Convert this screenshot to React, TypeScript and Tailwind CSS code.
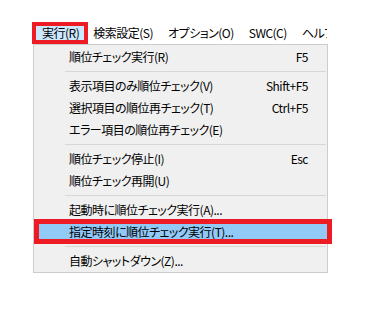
import React from "react";

const font = "font-['Yu_Gothic_UI','Noto_Sans_CJK_JP',sans-serif] [font-feature-settings:'palt'] tracking-[-0.5px]";

type Item = { label: string; shortcut?: string; active?: boolean } | "sep";

const items: Item[] = [
  { label: "順位チェック実行(R)", shortcut: "F5" },
  "sep",
  { label: "表示項目のみ順位チェック(V)", shortcut: "Shift+F5" },
  { label: "選択項目の順位再チェック(T)", shortcut: "Ctrl+F5" },
  { label: "エラー項目の順位再チェック(E)" },
  "sep",
  { label: "順位チェック停止(I)", shortcut: "Esc" },
  { label: "順位チェック再開(U)" },
  "sep",
  { label: "起動時に順位チェック実行(A)..." },
  { label: "指定時刻に順位チェック実行(T)...", active: true },
  "sep",
  { label: "自動シャットダウン(Z)..." },
];

export default function App() {
  return (
    <div className={`w-[370px] h-[323px] bg-white relative overflow-hidden text-[12px] leading-none text-black ${font}`}>
      <div className="pt-[21px] pl-[32px]">
        <div className="flex items-center h-[23px] w-[295px] overflow-hidden whitespace-nowrap">
          <div className="h-[22px] border-4 border-[#ed1c24] bg-[#cce8ff] pl-[6px] pr-[5px] flex items-center">
            実行(R)
          </div>
          <div className="ml-[5px]">検索設定(S)</div>
          <div className="ml-[15px]">オプション(O)</div>
          <div className="ml-[15px]">SWC(C)</div>
          <div className="ml-[15px]">ヘルプ(H)</div>
        </div>
        <div className="ml-[1px] w-[295px] border border-[#cccccc] bg-[#f0f0f0] pt-[1px]">
          {items.map((it, i) =>
            it === "sep" ? (
              <div key={i} className="h-[7px] flex items-center pl-[31px] pr-[1px]">
                <div className="h-px w-full bg-[#d7d7d7]" />
              </div>
            ) : (
              <div
                key={i}
                className={`relative h-[22px] flex items-center justify-between pl-[35px] pr-[19px] whitespace-nowrap ${
                  it.active ? "bg-[#91c9f7]" : ""
                }`}
              >
                <span>{it.label}</span>
                {it.shortcut && <span>{it.shortcut}</span>}
                {it.active && (
                  <div className="absolute -top-[2px] -bottom-[1px] left-0 -right-[5px] border-[5px] border-[#ed1c24]" />
                )}
              </div>
            )
          )}
        </div>
      </div>
    </div>
  );
}
